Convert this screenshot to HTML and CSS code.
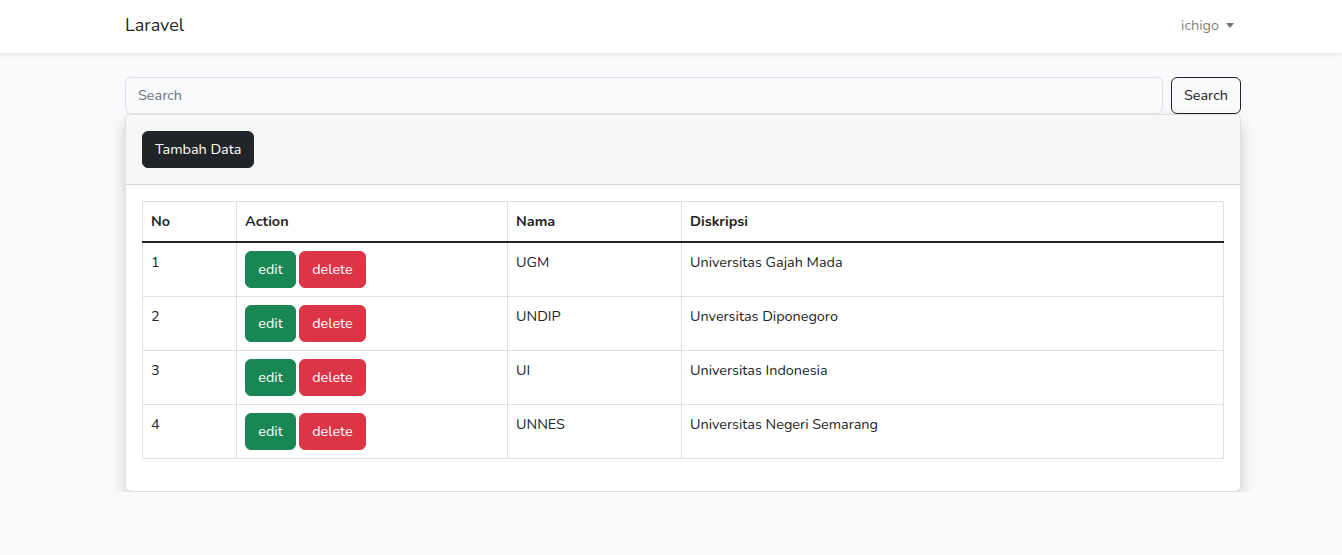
FILE: index.html
```html
<!DOCTYPE html>
<html lang="id">
<head>
<meta charset="utf-8">
<title>Laravel</title>
<link rel="stylesheet" href="styles.css">
</head>
<body>
<nav class="navbar">
  <div class="wrap nav-inner">
    <a class="brand" href="#">Laravel</a>
    <a class="user" href="#">ichigo <span class="caret"></span></a>
  </div>
</nav>
<main class="wrap main">
  <form class="search">
    <input class="search-input" type="text" placeholder="Search">
    <button class="btn btn-outline" type="button">Search</button>
  </form>
  <div class="card">
    <div class="card-header">
      <button class="btn btn-dark" type="button">Tambah Data</button>
    </div>
    <div class="card-body">
      <table class="table">
        <thead>
          <tr><th class="c-no">No</th><th class="c-act">Action</th><th class="c-nama">Nama</th><th>Diskripsi</th></tr>
        </thead>
        <tbody>
          <tr><td>1</td><td><div class="actions"><button class="btn btn-green">edit</button><button class="btn btn-red">delete</button></div></td><td>UGM</td><td>Universitas Gajah Mada</td></tr>
          <tr><td>2</td><td><div class="actions"><button class="btn btn-green">edit</button><button class="btn btn-red">delete</button></div></td><td>UNDIP</td><td>Unversitas Diponegoro</td></tr>
          <tr><td>3</td><td><div class="actions"><button class="btn btn-green">edit</button><button class="btn btn-red">delete</button></div></td><td>UI</td><td>Universitas Indonesia</td></tr>
          <tr><td>4</td><td><div class="actions"><button class="btn btn-green">edit</button><button class="btn btn-red">delete</button></div></td><td>UNNES</td><td>Universitas Negeri Semarang</td></tr>
        </tbody>
      </table>
    </div>
  </div>
</main>
</body>
</html>
```
FILE: styles.css
```css
* { box-sizing: border-box; }
html, body { margin: 0; }
body {
  background: #f8fafc;
  font-family: "Nunito", "Lato", "Open Sans", sans-serif;
  font-size: 14.4px;
  line-height: 1.6;
  color: #212529;
}
.wrap {
  width: 1116px;
  margin-left: 125px;
}
.navbar {
  background: #fff;
  height: 53px;
  box-shadow: 0 2px 4px rgba(0,0,0,.075);
}
.nav-inner {
  display: flex;
  align-items: center;
  justify-content: space-between;
  height: 51px;
}
.brand {
  font-size: 18px;
  color: #212529;
  text-decoration: none;
}
.user {
  color: rgba(0,0,0,.55);
  text-decoration: none;
  margin-right: 7px;
  display: flex;
  align-items: center;
}
.caret {
  display: inline-block;
  margin-left: 7px;
  border-top: 5px solid rgba(0,0,0,.55);
  border-left: 4.5px solid transparent;
  border-right: 4.5px solid transparent;
}
.main { padding-top: 24px; }
.search {
  display: flex;
  gap: 8px;
  margin: 0;
}
.search-input {
  flex: 1;
  height: 37px;
  border: 1px solid #dee2e6;
  border-radius: 6px;
  background: #f8f9fa;
  padding: 5px 12px 7px;
  font: inherit;
  color: #212529;
}
.search-input::placeholder { color: #6c757d; }
.btn {
  display: inline-block;
  font: inherit;
  line-height: 1.6;
  padding: 6px 12px;
  border: 1px solid transparent;
  border-radius: 6px;
  height: 37px;
  cursor: pointer;
}
.btn-outline {
  background: transparent;
  border-color: #212529;
  color: #212529;
}
.btn-dark { background: #212529; color: #fff; border-color: #212529; }
.btn-green { background: #198754; color: #fff; border-color: #198754; width: 51px; }
.btn-red { background: #dc3545; color: #fff; border-color: #dc3545; width: 67px; }
.actions {
  display: flex;
  gap: 3px;
}
.card {
  background: #fff;
  border: 1px solid rgba(0,0,0,.125);
  border-radius: 6px;
  box-shadow: 0 8px 16px rgba(0,0,0,.18);
}
.card-header {
  background: #f7f7f7;
  padding: 16px;
  border-bottom: 1px solid rgba(0,0,0,.125);
  border-radius: 5px 5px 0 0;
}
.card-body { padding: 16px; }
.table {
  width: 100%;
  border-collapse: collapse;
  margin-bottom: 16px;
}
.table th, .table td {
  border: 1px solid #dee2e6;
  padding: 8px;
  text-align: left;
  vertical-align: top;
}
.table th { font-weight: 700; }
.table thead th { border-bottom: 2px solid #212529; }
.table td { height: 54px; }
.c-no { width: 94px; }
.c-act { width: 271px; }
.c-nama { width: 174px; }
```
